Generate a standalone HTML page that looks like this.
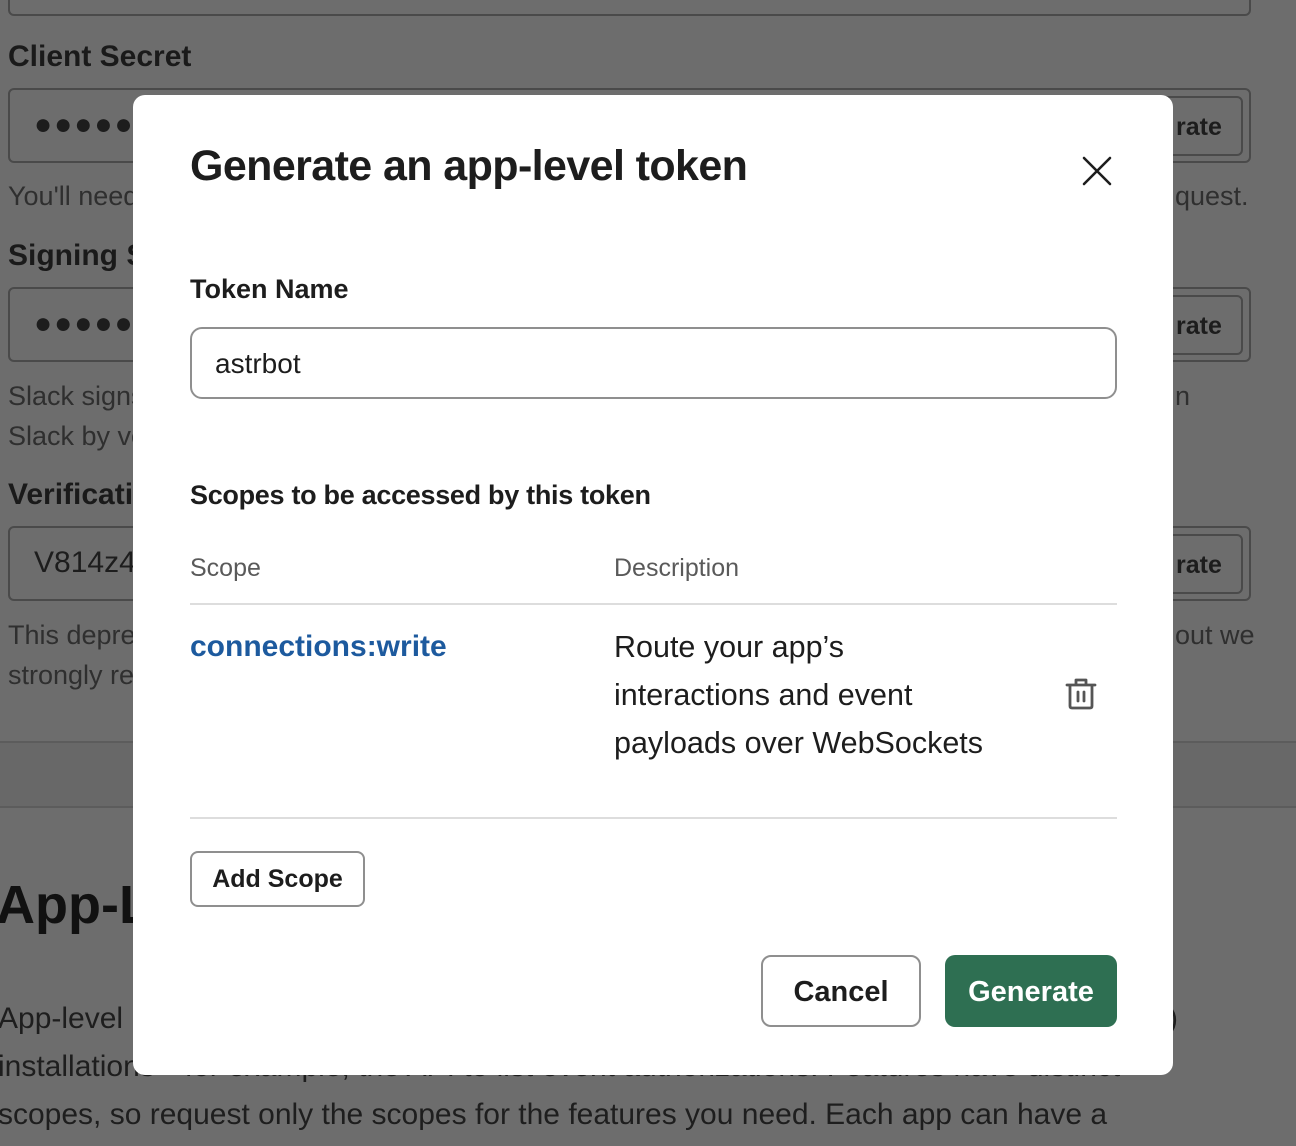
<!DOCTYPE html>
<html><head><style>
*{box-sizing:border-box;margin:0;padding:0}
body{width:1296px;height:1146px;overflow:hidden;background:#6d6d6d;font-family:"Liberation Sans",sans-serif;position:relative;color:#1d1d1d}
.a{position:absolute;white-space:nowrap}
.box{position:absolute;border:2px solid #4a4a4a;border-radius:6px}
.btn{position:absolute;border:2px solid #4a4a4a;border-radius:6px;font-weight:bold;font-size:25px;color:#1d1d1d;padding-left:44px;line-height:58px}
.g{color:#2f2f2f;font-size:27px}
.h{font-weight:bold;font-size:30px;color:#1a1a1a}
#m{position:absolute;left:133px;top:95px;width:1040px;height:980px;background:#fff;border-radius:12px}
#m .a{color:#1d1d1d}
</style></head><body>
<div class="box" style="left:8px;top:-20px;width:1243px;height:36px"></div>
<div class="a h" style="left:8px;top:40px">Client Secret</div>
<div class="box" style="left:8px;top:88px;width:1243px;height:75px"></div>
<div class="a" style="left:34px;top:108px;font-size:30px;letter-spacing:2px">●●●●●●</div>
<div class="btn" style="left:1130px;top:96px;width:113px;height:60px">rate</div>
<div class="a g" style="left:8px;top:181px">You'll need</div>
<div class="a g" style="left:1175px;top:181px">quest.</div>
<div class="a h" style="left:8px;top:239px">Signing S</div>
<div class="box" style="left:8px;top:287px;width:1243px;height:75px"></div>
<div class="a" style="left:34px;top:307px;font-size:30px;letter-spacing:2px">●●●●●●</div>
<div class="btn" style="left:1130px;top:295px;width:113px;height:60px">rate</div>
<div class="a g" style="left:8px;top:381px">Slack signs</div>
<div class="a g" style="left:1175px;top:381px">n</div>
<div class="a g" style="left:8px;top:421px">Slack by ve</div>
<div class="a h" style="left:8px;top:478px">Verificati</div>
<div class="box" style="left:8px;top:526px;width:1243px;height:75px"></div>
<div class="a" style="left:34px;top:546px;font-size:30px;color:#1d1d1d">V814z4</div>
<div class="btn" style="left:1130px;top:534px;width:113px;height:60px">rate</div>
<div class="a g" style="left:8px;top:620px">This depre</div>
<div class="a g" style="left:1175px;top:620px">out we</div>
<div class="a g" style="left:8px;top:660px">strongly re</div>
<div style="position:absolute;left:0;top:741px;width:1296px;height:67px;background:#686868;border-top:2px solid #5c5c5c;border-bottom:2px solid #5c5c5c"></div>
<div class="a" style="left:-4px;top:874px;font-size:54px;font-weight:bold;color:#111">App-L</div>
<div class="a g" style="left:-2px;top:1002px;font-size:30px;color:#1e1e1e">App-level</div>
<div class="a g" style="left:1168px;top:1002px;font-size:30px;color:#1e1e1e">)</div>
<div class="a g" style="left:-2px;top:1050px;font-size:30px;color:#1e1e1e">installations—for example, the API to list event authorizations. Features have distinct</div>
<div class="a g" style="left:-2px;top:1098px;font-size:30px;color:#1e1e1e">scopes, so request only the scopes for the features you need. Each app can have a</div>

<div id="m">
<div class="a" style="left:57px;top:47px;font-size:43px;font-weight:bold;letter-spacing:-0.6px">Generate an app-level token</div>
<svg class="a" style="left:948px;top:60px" width="32" height="32" viewBox="0 0 32 32"><path d="M3 3L29 29M29 3L3 29" stroke="#1d1d1d" stroke-width="2.6" stroke-linecap="round"/></svg>
<div class="a" style="left:57px;top:179px;font-size:27px;font-weight:bold">Token Name</div>
<div style="position:absolute;left:57px;top:232px;width:927px;height:72px;border:2px solid #8f8f8f;border-radius:12px"></div>
<div class="a" style="left:82px;top:253px;font-size:28px">astrbot</div>
<div class="a" style="left:57px;top:385px;font-size:27px;font-weight:bold;letter-spacing:-0.3px">Scopes to be accessed by this token</div>
<div class="a" style="left:57px;top:459px;font-size:25px;color:#5a5a5a !important">Scope</div>
<div class="a" style="left:481px;top:459px;font-size:25px;color:#5a5a5a !important">Description</div>
<div style="position:absolute;left:57px;top:508px;width:927px;height:2px;background:#ddd"></div>
<div class="a" style="left:57px;top:535px;font-size:30px;font-weight:bold;color:#1d5a9e !important">connections:write</div>
<div class="a" style="left:481px;top:528px;font-size:30.5px;line-height:48px">Route your app’s<br>interactions and event<br>payloads over WebSockets</div>
<svg class="a" style="left:930px;top:580px" width="36" height="36" viewBox="0 0 36 36" fill="none" stroke="#555" stroke-width="2.8" stroke-linecap="round" stroke-linejoin="round"><path d="M4 10H32M13 10V5H23V10M7 10V31Q7 33 9 33H27Q29 33 29 31V10M15 17V26M21 17V26"/></svg>
<div style="position:absolute;left:57px;top:722px;width:927px;height:2px;background:#ddd"></div>
<div style="position:absolute;left:57px;top:756px;width:175px;height:56px;border:2px solid #8f8f8f;border-radius:8px;font-size:25px;font-weight:bold;text-align:center;line-height:52px">Add Scope</div>
<div style="position:absolute;left:628px;top:860px;width:160px;height:72px;border:2px solid #8f8f8f;border-radius:10px;font-size:29px;font-weight:bold;text-align:center;line-height:70px">Cancel</div>
<div style="position:absolute;left:812px;top:860px;width:172px;height:72px;background:#2e6f52;border-radius:10px;font-size:29px;font-weight:bold;text-align:center;line-height:74px;color:#fff">Generate</div>
</div>
</body></html>
